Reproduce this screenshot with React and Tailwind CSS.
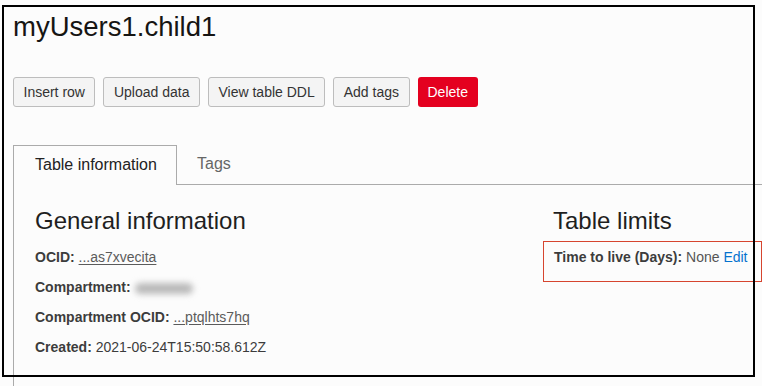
import React from "react";

const actions = ["Insert row", "Upload data", "View table DDL", "Add tags"];

const Field = ({ label, children }) => {
  return (
    <div className="leading-[30px] text-[14px] text-[#3c3c3c]">
      <span className="font-bold">{label}</span> {children}
    </div>
  );
};

const Ocid = ({ text }) => {
  return <span className="underline text-[#5b5b5b] underline-offset-2">{text}</span>;
};

const App = () => {
  return (
    <div className="relative w-[762px] h-[386px] overflow-hidden bg-[#fcfcfc] font-['Liberation_Sans',Arial,sans-serif] text-[#161513]">
      <h1 className="pt-3 pl-[13px] text-[27.5px] leading-[30px]">myUsers1.child1</h1>

      <div className="flex gap-2 pl-[13px] mt-[35px]">
        {actions.map((a) => (
          <button
            key={a}
            className="h-[30px] px-[9.5px] text-[14px] text-[#333] bg-[#f4f4f4] border border-[#bdbdbd] rounded-[3px]"
          >
            {a}
          </button>
        ))}
        <button className="h-[30px] px-[10px] text-[14px] text-white bg-[#e4001f] rounded-[3px]">
          Delete
        </button>
      </div>

      <div className="flex mt-[38px] pl-[13px] h-[40px]">
        <div className="w-[164px] border border-b-0 border-[#ababab] pl-[21px] pt-[7px] text-[16px] leading-6 text-[#222]">
          Table information
        </div>
        <div className="flex-1 border-b border-[#ababab] pl-[20px] pt-[7px] text-[16px] leading-6 text-[#666]">
          Tags
        </div>
      </div>

      <div className="ml-[13px] border-l border-[#ababab] pl-[21px] pt-[22px] h-[210px] flex">
        <div className="w-[518px]">
          <h2 className="text-[24px] leading-[28px] text-[#1f1f1f]">General information</h2>
          <div className="mt-[7px]">
            <Field label="OCID:">
              <Ocid text="...as7xvecita" />
            </Field>
            <Field label="Compartment:">
              <span className="inline-block align-middle w-[58px] h-[11px] bg-[#b9b9b9] rounded-full blur-[3px]" />
            </Field>
            <Field label="Compartment OCID:">
              <Ocid text="...ptqlhts7hq" />
            </Field>
            <Field label="Created:">2021-06-24T15:50:58.612Z</Field>
          </div>
        </div>
        <div className="flex-1">
          <h2 className="text-[24px] leading-[28px] text-[#1f1f1f]">Table limits</h2>
          <div className="mt-[6px] -ml-[10px] pl-[10px] w-[219px] h-[41px] border border-[#d6452f]">
            <Field label="Time to live (Days):">
              <span className="text-[#555]">None</span>{" "}
              <span className="text-[#0572ce]">Edit</span>
            </Field>
          </div>
        </div>
      </div>

      <div className="absolute left-[2px] top-[5px] w-[753px] h-[372px] border-2 border-black pointer-events-none" />
    </div>
  );
};

export default App;
